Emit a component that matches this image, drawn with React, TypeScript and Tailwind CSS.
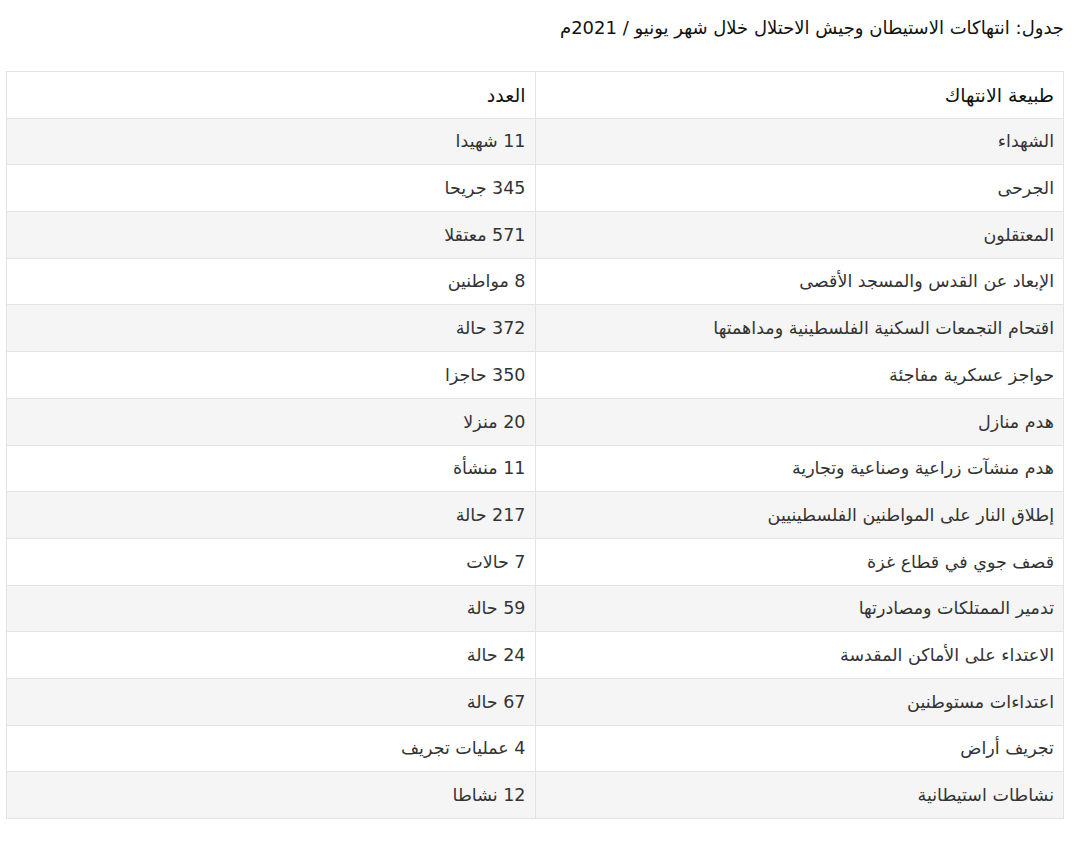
import React from 'react'

const rows: [string, string][] = [
  ['الشهداء', '11 شهيدا'],
  ['الجرحى', '345 جريحا'],
  ['المعتقلون', '571 معتقلا'],
  ['الإبعاد عن القدس والمسجد الأقصى', '8 مواطنين'],
  ['اقتحام التجمعات السكنية الفلسطينية ومداهمتها', '372 حالة'],
  ['حواجز عسكرية مفاجئة', '350 حاجزا'],
  ['هدم منازل', '20 منزلا'],
  ['هدم منشآت زراعية وصناعية وتجارية', '11 منشأة'],
  ['إطلاق النار على المواطنين الفلسطينيين', '217 حالة'],
  ['قصف جوي في قطاع غزة', '7 حالات'],
  ['تدمير الممتلكات ومصادرتها', '59 حالة'],
  ['الاعتداء على الأماكن المقدسة', '24 حالة'],
  ['اعتداءات مستوطنين', '67 حالة'],
  ['تجريف أراض', '4 عمليات تجريف'],
  ['نشاطات استيطانية', '12 نشاطا'],
]

export default function App() {
  return (
    <div dir="rtl" className="min-h-screen bg-white font-['DejaVu_Sans',sans-serif] text-[#222]">
      {/* TITLE */}
      <div className="pr-[16px] pl-[6px] pt-[15px]">
        <h1 className="text-[18px] leading-[26px] text-[#111]">
          جدول: انتهاكات الاستيطان وجيش الاحتلال خلال شهر يونيو / 2021م
        </h1>
      </div>

      {/* TABLE */}
      <div className="mr-[16px] ml-[6px] mt-[30px]">
        <table className="w-full border-collapse border border-[#e3e3e3] text-[17.5px]">
          <thead>
            <tr className="h-[46.7px] bg-white">
              <th className="w-1/2 border border-[#e3e3e3] px-[9px] text-right text-[19px] font-normal text-[#111]">طبيعة الانتهاك</th>
              <th className="w-1/2 border border-[#e3e3e3] px-[9px] text-right text-[19px] font-normal text-[#111]">العدد</th>
            </tr>
          </thead>
          <tbody>
            {rows.map(([kind, count], i) => (
              <tr key={i} className={i % 2 === 0 ? 'h-[46.7px] bg-[#f5f5f5]' : 'h-[46.7px] bg-white'}>
                <td className="border border-[#e3e3e3] px-[9px] text-right font-normal text-[#333]">{kind}</td>
                <td className="border border-[#e3e3e3] px-[9px] text-right font-normal text-[#333]">{count}</td>
              </tr>
            ))}
          </tbody>
        </table>
      </div>
    </div>
  )
}
